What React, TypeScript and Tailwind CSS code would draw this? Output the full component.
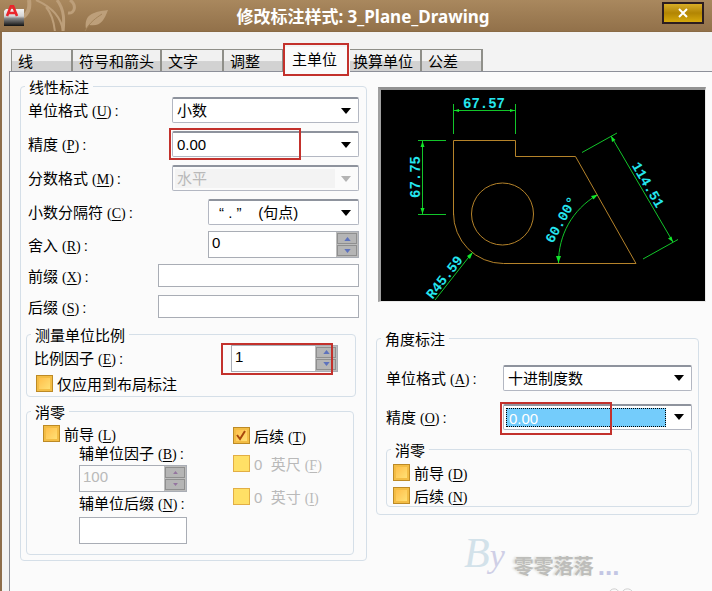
import React, { useId } from "react";

const body = "font-['Liberation_Sans','Noto_Sans_CJK_SC',sans-serif]";

function Key({ k }: { k: string }) {
  return (
    <span className="ml-1 font-['Liberation_Serif',serif] text-[14px]">
      (<span className="underline underline-offset-2">{k}</span>)
    </span>
  );
}

function Arrow({ muted = false }: { muted?: boolean }) {
  return (
    <svg viewBox="0 0 10 6" className={`pointer-events-none absolute right-[7px] top-1/2 h-[6px] w-[10px] -translate-y-1/2 ${muted ? "fill-[#b4b4b4]" : "fill-black"}`}>
      <path d="M0 0H10L5 6Z" />
    </svg>
  );
}

function Mark({ className }: { className: string }) {
  return <div className={`pointer-events-none absolute border-2 border-[#c3312c] ${className}`} />;
}

function Row({ id, text, k, className, children }: { id: string; text: string; k: string; className: string; children: React.ReactNode }) {
  return (
    <div className={`flex items-center justify-between ${className}`}>
      <label htmlFor={id} className="whitespace-nowrap pt-[3px]">
        {text}
        <Key k={k} />
        <span className="ml-[3px]">:</span>
      </label>
      {children}
    </div>
  );
}

function Combo({ id, value, className, muted = false, selected = false, children }: { id: string; value: string; className: string; muted?: boolean; selected?: boolean; children?: React.ReactNode }) {
  return (
    <div className={`relative h-[26px] rounded-[2px] border border-t-2 border-[#b3b7c2] border-t-[#8e939d] p-[2px] ${muted ? "bg-[#fbfbfb]" : "bg-white"} ${className}`}>
      <select
        id={id}
        disabled={muted}
        className={`block h-full appearance-none px-[2px] text-[15px] leading-[19px] opacity-100 outline-none ${
          muted ? "w-[160px] bg-[#f3f3f3] text-[#b9b9b9]" : selected ? "w-[160px] border border-dotted border-black bg-[#74ccfb] text-white" : "w-full bg-transparent text-black"
        }`}
      >
        <option>{value}</option>
      </select>
      <Arrow muted={muted} />
      {children}
    </div>
  );
}

function Spin({ id, value, className, muted = false, children }: { id: string; value: string; className: string; muted?: boolean; children?: React.ReactNode }) {
  return (
    <div className={`relative flex h-[27px] border border-[#a9adb5] ${muted ? "bg-[#fbfbfb]" : "bg-white"} ${className}`}>
      <input id={id} defaultValue={value} disabled={muted} className={`min-w-0 flex-1 bg-transparent px-[3px] pb-[3px] text-[15px] outline-none ${muted ? "text-[#b9b9b9]" : "text-black"}`} />
      <div className="flex w-[22px] flex-col gap-[1px] bg-[#bcbcbc] p-[1px]">
        {["up", "down"].map((dir) => (
          <button key={dir} type="button" aria-label={dir} disabled={muted} className="flex flex-1 items-center justify-center border border-[#8f8f8f] bg-[#b5b5b5]">
            <svg viewBox="0 0 8 5" className={muted ? "h-[3px] w-[5px] fill-[#94749f]" : "h-[4px] w-[7px] fill-[#5d72bd]"}>
              <path d={dir === "up" ? "M4 0L8 5H0Z" : "M0 0H8L4 5Z"} />
            </svg>
          </button>
        ))}
      </div>
      {children}
    </div>
  );
}

function Check({ text, k, checked = false, muted = false, className = "" }: { text: string; k?: string; checked?: boolean; muted?: boolean; className?: string }) {
  const id = useId();
  return (
    <div className={`flex h-[17px] items-center gap-1 ${muted ? "text-[#b9b9b9]" : "text-black"} ${className}`}>
      <span className="relative block h-[17px] w-[17px] shrink-0">
        <input
          id={id}
          type="checkbox"
          defaultChecked={checked}
          disabled={muted}
          className={`block h-[17px] w-[17px] appearance-none border ${
            muted ? "border-[#e2ae45] bg-[#ffe066]" : "border-[#bd8a25] bg-linear-to-br from-[#ffb940] to-[#ffe67c] shadow-[inset_0_0_0_2px_#f3bd45]"
          }`}
        />
        {checked && (
          <svg viewBox="0 0 17 17" className="pointer-events-none absolute inset-0 fill-none stroke-[#a8480c] stroke-2">
            <path d="M4 8L7 12L12 4" />
          </svg>
        )}
      </span>
      <label htmlFor={id} className="whitespace-nowrap pt-[3px]">
        {text}
        {k && <Key k={k} />}
      </label>
    </div>
  );
}

function Group({ title, className = "", inner, children }: { title: string; className?: string; inner: string; children: React.ReactNode }) {
  return (
    <fieldset className={`min-w-0 rounded-[4px] border border-[#d5dfe8] ${className}`}>
      <legend className="ml-1 h-[14px] px-1 leading-[17px]">{title}</legend>
      <div className={inner}>{children}</div>
    </fieldset>
  );
}

const tabs = [
  { name: "线", size: "w-[62px] pl-[6px]" },
  { name: "符号和箭头", size: "w-[89px] pl-[6px]" },
  { name: "文字", size: "w-[62px] pl-[6px]" },
  { name: "调整", size: "w-[60px] pl-[6px]" },
  { name: "主单位", size: "w-[66px] pl-2" },
  { name: "换算单位", size: "w-[72px] pl-[3px]" },
  { name: "公差", size: "w-[61px] pl-[6px]" },
];

function Preview() {
  return (
    <svg viewBox="381 90 324 211" className="block w-full bg-black" fill="none" strokeWidth="1">
      <g stroke="#b5832a">
        <path d="M453.5 215V140.500H515.500V156.500H575.500L636 263.500H503.500A50 50 0 0 1 453.500 213" />
        <circle cx="502.500" cy="214" r="31" />
      </g>
      <g stroke="#12c52a">
        <path d="M453.500 104V134M515.500 104V134M453.500 110.500H515.500M418 140.500H446M418 214.500H446M422.500 140V214M582 152.500L617 133M643 259L678 239.500M611 136L673 242M435 300L472 253M558.500 263C558.500 235 572 210 597 195" />
      </g>
      <g fill="#12e52a">
        <path d="M454 110.500L459 109V112ZM515 110.500L510 109V112ZM422.500 141L420.500 147H424.500ZM422.500 214L420.500 208H424.500ZM558.500 263L556 256H561ZM598 194.500L591 196L593.500 199.500ZM473 252L467 256L470 259ZM611 136L612 142L615.500 140ZM673 242L668 238.500L671.500 236.500Z" />
      </g>
      <g fill="#25e5ee" textAnchor="middle" className="font-['Liberation_Mono',monospace] text-[14px] font-bold">
        <text x="484" y="108">67.57</text>
        <text transform="translate(420 177) rotate(-90)">67.75</text>
        <text transform="translate(448 280) rotate(-52)">R45.59</text>
        <text transform="translate(565 222) rotate(-61)">60.00°</text>
        <text transform="translate(644 187) rotate(60)">114.51</text>
      </g>
    </svg>
  );
}

export default function App() {
  return (
    <div className={`flex min-h-screen flex-col overflow-hidden bg-[#f3f3f3] text-[15px] leading-[20px] text-black ${body}`}>
      <header className="relative flex h-[32px] items-center justify-center overflow-hidden border-b border-[#8a6b46] bg-linear-to-b from-[#a9885e] to-[#92714a]">
        <svg viewBox="0 0 120 32" className="absolute left-0 top-0 h-[32px] w-[120px]" fill="none" stroke="#bd9f7a">
          <path d="M29 0C31 12 24 20 13 19" strokeWidth="4" />
          <path d="M36 0C54 8 62 20 63 32M46 7C52 14 54 22 55 32" strokeWidth="2" />
          <path d="M57 0C65 10 64 22 63 32M70 0C77 5 75 14 68 13" strokeWidth="3" />
          <path d="M86 29C84 15 92 12 108 10C104 20 101 27 89 25Z" fill="#bd9f7a" stroke="none" />
          <path d="M85 31C90 22 96 18 102 14" stroke="#a3835a" />
        </svg>
        <svg viewBox="0 0 22 22" className="absolute left-[4px] top-[5px] h-[22px] w-[22px]">
          <defs>
            <linearGradient id="metal" x1="0" y1="0" x2="0" y2="1">
              <stop offset="0" stopColor="#f4f4f4" />
              <stop offset="0.420" stopColor="#d5d5d5" />
              <stop offset="0.550" stopColor="#888" />
              <stop offset="1" stopColor="#111" />
            </linearGradient>
          </defs>
          <path d="M0 6L2 4H20V21H0Z" fill="url(#metal)" />
          <path d="M3 11L7 1H9L13 11M5 8H11" stroke="#ea252b" strokeWidth="2.600" fill="none" />
        </svg>
        <h1 className="pl-[14px] pt-[2px] font-['Noto_Sans','Noto_Sans_CJK_SC',sans-serif] text-[17px] font-bold text-white">修改标注样式: 3_Plane_Drawing</h1>
        <button type="button" aria-label="关闭" className="absolute right-[8px] top-[2px] flex h-[22px] w-[42px] items-center justify-center border-2 border-[#2c1d20] bg-linear-to-b from-[#d8ad25] via-[#b28503] to-[#d6a90c]">
          <svg viewBox="0 0 12 10" className="h-[10px] w-[12px] fill-none stroke-white stroke-2">
            <path d="M2 1L10 9M10 1L2 9" />
          </svg>
        </button>
      </header>

      <main className="flex flex-1 flex-col border-l-2 border-[#8d6d4a] pl-[7px] pt-[15px]">
        <div role="tablist" className="flex items-end pl-[2px]">
          {tabs.map((t) =>
            t.name === "主单位" ? (
              <button key={t.name} type="button" role="tab" aria-selected="true" className={`relative -mb-px h-[25px] bg-[#fbfbfb] text-left leading-[25px] ${t.size}`}>
                {t.name}
                <Mark className="-bottom-[4px] -left-px -top-[4px] right-px" />
              </button>
            ) : (
              <button key={t.name} type="button" role="tab" aria-selected="false" className={`h-[22px] whitespace-nowrap border-r-2 border-t border-[#8f8f89] bg-linear-to-b from-[#f1f1f1] from-50% to-[#d2d2d2] to-55% text-left leading-[23px] first:border-l ${t.size}`}>
                {t.name}
              </button>
            ),
          )}
        </div>

        <div role="tabpanel" className="grid flex-1 grid-cols-[347fr_330fr] items-start gap-[9px] border-l border-t border-[#8d9099] bg-[#fbfbfb] pl-[10px] pr-[6px] pt-[7px]">
          <Group title="线性标注" inner="px-[5px] pb-[5px]">
            <div className="px-[2px]">
              <Row id="unit" text="单位格式" k="U" className="h-[34px]">
                <Combo id="unit" value="小数" className="w-[187px]" />
              </Row>
              <Row id="precision" text="精度" k="P" className="h-[34px]">
                <Combo id="precision" value="0.00" className="w-[187px]">
                  <Mark className="-left-[4px] -top-[5px] h-[32px] w-[132px]" />
                </Combo>
              </Row>
              <Row id="fraction" text="分数格式" k="M" className="h-[34px]">
                <Combo id="fraction" value="水平" muted className="w-[187px]" />
              </Row>
              <Row id="separator" text="小数分隔符" k="C" className="h-[34px]">
                <Combo id="separator" value={"“ . ”\u00a0\u00a0\u00a0 (句点)"} className="w-[151px] pl-2" />
              </Row>
              <Row id="round" text="舍入" k="R" className="h-[31px]">
                <Spin id="round" value="0" className="w-[151px]" />
              </Row>
              <Row id="prefix" text="前缀" k="X" className="h-[31px]">
                <input id="prefix" className="h-[23px] w-[201px] border border-[#a9adb5] bg-white px-1 outline-none" />
              </Row>
              <Row id="suffix" text="后缀" k="S" className="h-[31px]">
                <input id="suffix" className="h-[23px] w-[201px] border border-[#a9adb5] bg-white px-1 outline-none" />
              </Row>
            </div>

            <Group title="测量单位比例" className="mr-[5px] mt-[5px]" inner="pb-1 pl-[7px] pr-[17px]">
              <Row id="factor" text="比例因子" k="E" className="h-[34px]">
                <Spin id="factor" value="1" className="w-[107px]">
                  <Mark className="-left-[11px] -top-[3px] h-[32px] w-[112px]" />
                </Spin>
              </Row>
              <Check text="仅应用到布局标注" className="pl-[2px]" />
            </Group>

            <Group title="消零" className="mr-[7px] mt-[7px]" inner="pb-[10px] pl-4">
              <div className="grid grid-cols-[190fr_120fr] items-start">
                <div className="flex flex-col pt-[7px]">
                  <Check text="前导" k="L" />
                  <label htmlFor="sub" className="pl-9 pt-[2px]">
                    辅单位因子
                    <Key k="B" />
                    <span className="ml-[3px]">:</span>
                  </label>
                  <Spin id="sub" value="100" muted className="ml-9 w-[108px]" />
                  <label htmlFor="subsuffix" className="pb-[2px] pl-9 pt-[2px]">
                    辅单位后缀
                    <Key k="N" />
                    <span className="ml-[3px]">:</span>
                  </label>
                  <input id="subsuffix" className="ml-9 h-[27px] w-[108px] border border-[#a9adb5] bg-white px-1 outline-none" />
                </div>
                <div className="flex flex-col pt-[9px]">
                  <Check text="后续" k="T" checked />
                  <Check text={"0\u00a0 英尺"} k="F" muted className="mt-[11px]" />
                  <Check text={"0\u00a0 英寸"} k="I" muted className="mt-4" />
                </div>
              </div>
            </Group>
          </Group>

          <div className="flex flex-col">
            <div className="ml-[2px] mt-2 border-b border-l-[3px] border-r border-t-[3px] border-[#e8e8e8] border-l-[#a0a0a0] border-t-[#929292]">
              <Preview />
            </div>

            <Group title="角度标注" className="mr-[7px] mt-[29px]" inner="pb-[7px] pl-[9px] pr-[6px]">
              <div className="pt-[13px]">
                <Row id="angle" text="单位格式" k="A" className="h-[39px]">
                  <Combo id="angle" value="十进制度数" className="w-[189px]" />
                </Row>
                <Row id="angleprecision" text="精度" k="O" className="h-[39px]">
                  <Combo id="angleprecision" value="0.00" selected className="w-[189px]">
                    <Mark className="-left-[4px] -top-[4px] h-[33px] w-[112px]" />
                  </Combo>
                </Row>
              </div>
              <Group title="消零" className="mt-[6px]" inner="pb-[2px] pl-[6px]">
                <div className="flex flex-col gap-[6px] pt-2">
                  <Check text="前导" k="D" />
                  <Check text="后续" k="N" />
                </div>
              </Group>
            </Group>

            <div className="flex items-end self-start pl-[88px] pt-[10px]">
              <span className="font-['Liberation_Serif',serif] text-[42px] italic leading-[56px] text-[#d3e2ea]">
                B<span className="text-[34px] text-[#cfcfe6]">y</span>
              </span>
              <span className="pb-[6px] pl-[9px] font-['Noto_Sans_CJK_SC',sans-serif] text-[20px] font-bold leading-[24px] text-[#bdbdba] [text-shadow:-2px_0_2px_#deded8]">零零落落</span>
              <span className="pb-2 pl-1 text-[26px] font-bold text-[#c3c6e4]">...</span>
            </div>
            <svg viewBox="0 0 26 5" className="ml-[232px] mt-1 h-[5px] w-[26px] fill-none stroke-[#cfcfcf]">
              <path d="M1 5C2 0 10 -1 11 5M14 5C15 0 23 -1 25 5" />
            </svg>
          </div>
        </div>
      </main>
    </div>
  );
}
